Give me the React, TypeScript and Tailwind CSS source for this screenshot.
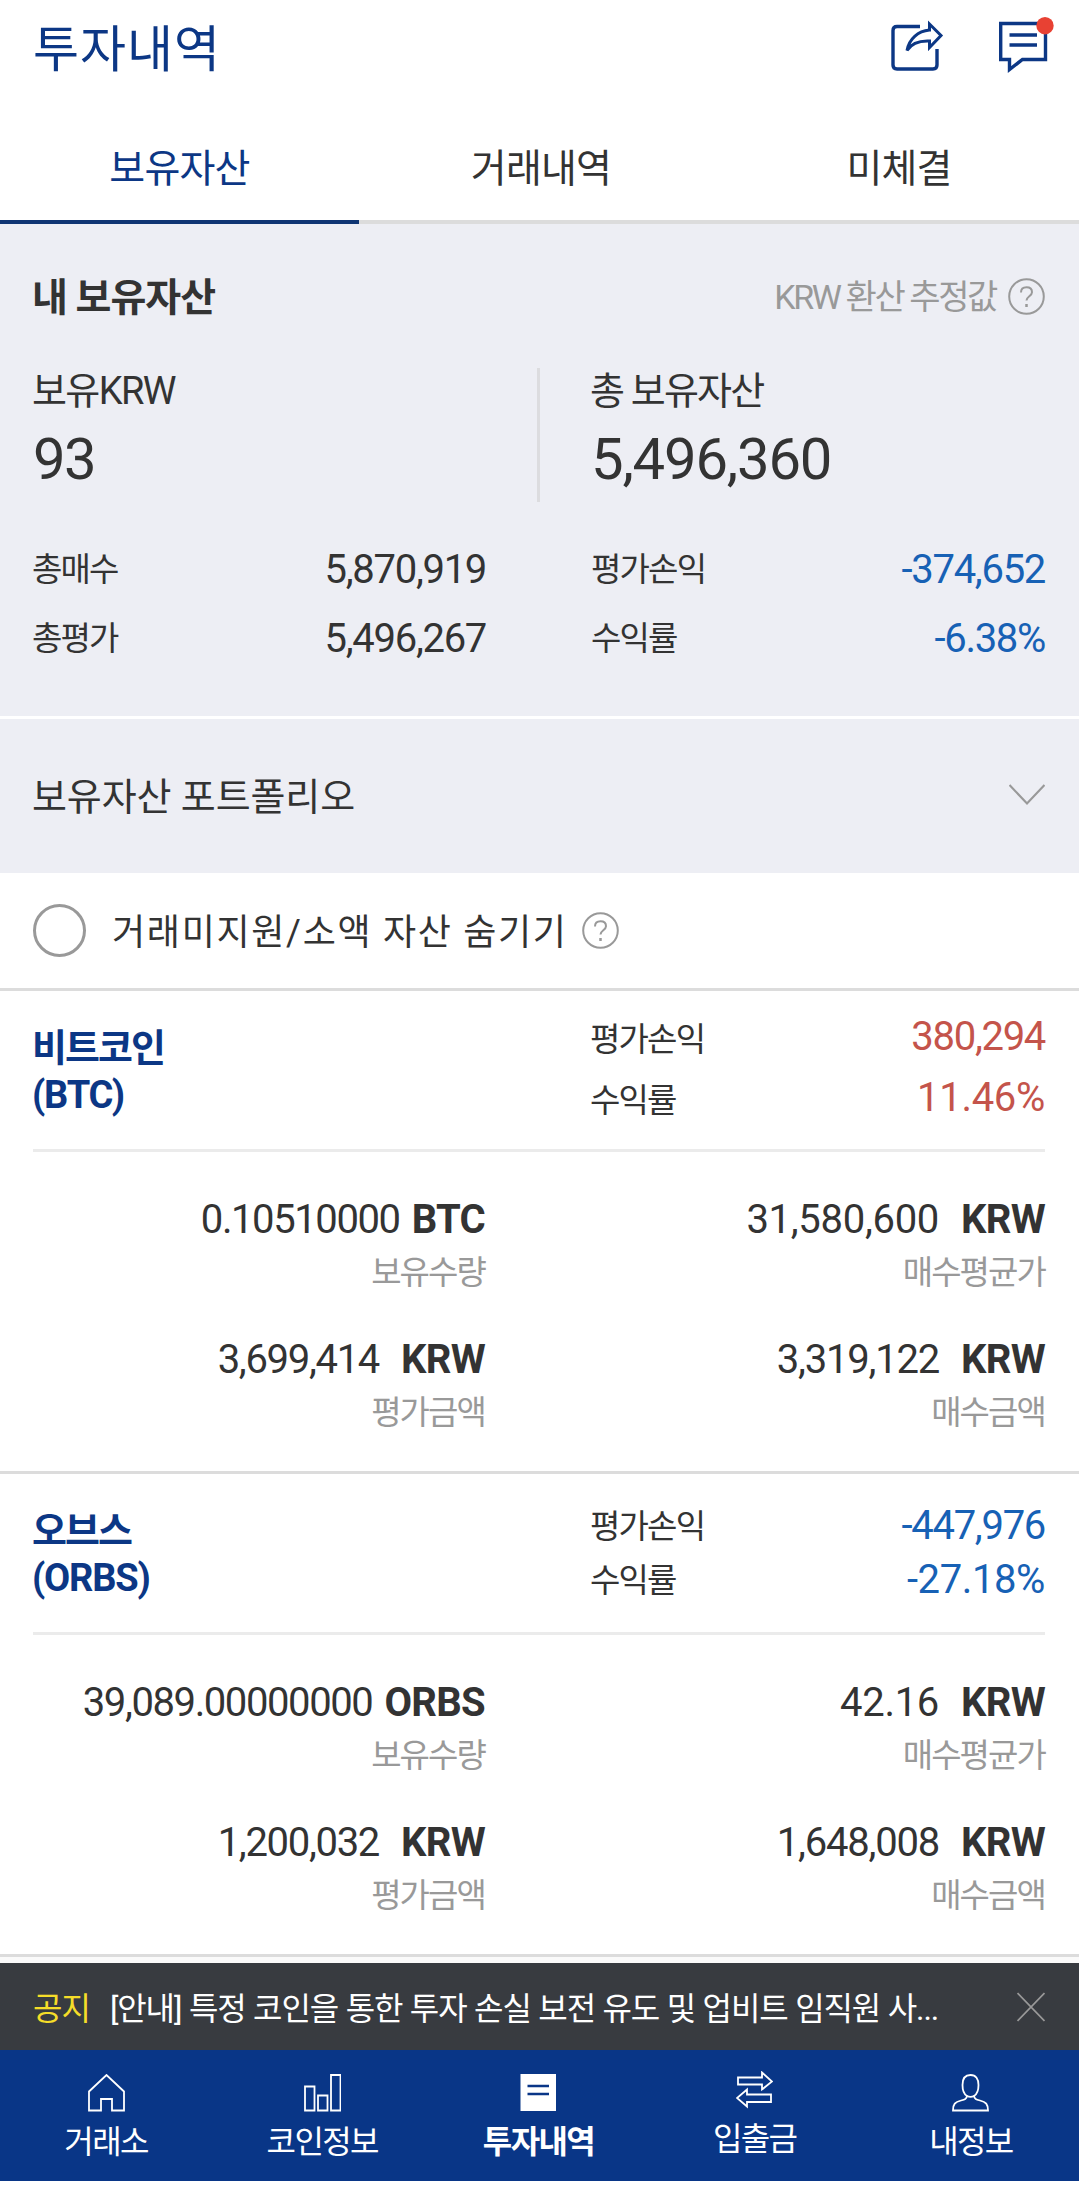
import type { ReactNode } from 'react';

interface Asset {
  name: string;
  symbol: string;
  profit: string;
  profitClass: string;
  rate: string;
  rateClass: string;
  toneClass: string;
  labelsClass: string;
  valuesClass: string;
  cells: { value: string; valueClass: string; unit: string; unitClass: string; label: string }[];
}

const assets: Asset[] = [
  {
    name: '비트코인',
    symbol: 'BTC',
    profit: '380,294',
    profitClass: 'tracking-[-1.3px]',
    rate: '11.46%',
    rateClass: 'tracking-[-0.3px]',
    toneClass: 'text-[#c4544b]',
    labelsClass: 'leading-[61px]',
    valuesClass: 'leading-[61px] pb-[7px]',
    cells: [
      { value: '0.10510000', valueClass: 'tracking-[-1.4px]', unit: 'BTC', unitClass: 'ml-[12px]', label: '보유수량' },
      { value: '31,580,600', valueClass: 'tracking-[-0.3px]', unit: 'KRW', unitClass: 'ml-[22px]', label: '매수평균가' },
      { value: '3,699,414', valueClass: 'tracking-[-1.3px]', unit: 'KRW', unitClass: 'ml-[22px]', label: '평가금액' },
      { value: '3,319,122', valueClass: 'tracking-[-1.2px]', unit: 'KRW', unitClass: 'ml-[22px]', label: '매수금액' },
    ],
  },
  {
    name: '오브스',
    symbol: 'ORBS',
    profit: '-447,976',
    profitClass: 'tracking-[-1.3px]',
    rate: '-27.18%',
    rateClass: 'tracking-[-0.4px]',
    toneClass: 'text-[#1761b5]',
    labelsClass: 'leading-[54px] pt-[1px]',
    valuesClass: 'leading-[54px]',
    cells: [
      { value: '39,089.00000000', valueClass: 'tracking-[-1.4px]', unit: 'ORBS', unitClass: 'ml-[12px]', label: '보유수량' },
      { value: '42.16', valueClass: 'tracking-[-0.3px]', unit: 'KRW', unitClass: 'ml-[22px]', label: '매수평균가' },
      { value: '1,200,032', valueClass: 'tracking-[-1.3px]', unit: 'KRW', unitClass: 'ml-[22px]', label: '평가금액' },
      { value: '1,648,008', valueClass: 'tracking-[-1.2px]', unit: 'KRW', unitClass: 'ml-[22px]', label: '매수금액' },
    ],
  },
];

export default function App() {
  return (
    <div className="w-[1079px] h-[2189px] overflow-hidden bg-white text-[#333] font-['Roboto','Noto_Sans_CJK_KR',sans-serif]">
      {/* Header */}
      <header className="flex h-[100px] items-start justify-between pl-[33px] pr-[24px] text-[#0c3785]">
        <h1 className="text-[50px] leading-[100px] tracking-[1px]">투자내역</h1>
        <div className="flex pt-[17px]">
          <ShareIcon />
          <ChatIcon />
        </div>
      </header>

      {/* Tabs */}
      <nav className="grid h-[124px] grid-cols-[359px_361px_1fr] grid-rows-[124px] text-center text-[39px] leading-[138px] tracking-[-0.8px]">
        <a className="h-[124px] border-b-4 border-[#0f3573] text-[#0c3785]">보유자산</a>
        <a className="h-[124px] border-b-4 border-[#dcdcdc] pl-[3px]">거래내역</a>
        <a className="h-[124px] border-b-4 border-[#dcdcdc] pr-[1px]">미체결</a>
      </nav>

      <Summary />

      <section className="flex h-[157px] items-center justify-between border-t-3 border-white bg-[#edeef4] pl-[32px] pr-[34px]">
        <span className="mt-[2px] text-[38px] tracking-[-0.1px]">보유자산 포트폴리오</span>
        <svg width="36" height="22" viewBox="0 0 36 22" fill="none" stroke="#999" strokeWidth="2.2" className="mb-[2px]">
          <path d="M0.500 1l17.500 18.500L35.500 1" />
        </svg>
      </section>

      <div className="flex h-[115px] items-center pl-[33px]">
        <span className="size-[53px] rounded-full border-3 border-[#999]" />
        <span className="ml-[26px] mt-[5px] text-[36px] tracking-[1.7px]">거래미지원/소액 자산 숨기기</span>
        <HelpIcon className="ml-[14px]" />
      </div>

      {assets.map((asset) => (
        <AssetCard key={asset.symbol} asset={asset} />
      ))}

      <div className="h-[9px] border-t-3 border-[#dcdcdc] bg-[#fafafa]" />

      {/* Notice */}
      <div className="flex h-[87px] items-center bg-[#383b40] pl-[33px] pr-[34px] text-[32px] text-white">
        <span className="mt-[4px] tracking-[-1px] text-[#f5dd29]">공지</span>
        <span className="ml-[20px] mt-[4px] flex-1 tracking-[-1.1px] [word-spacing:0.7px] whitespace-nowrap">
          [안내] 특정 코인을 통한 투자 손실 보전 유도 및 업비트 임직원 사...
        </span>
        <svg width="28" height="30" viewBox="0 0 28 30" fill="none" stroke="#999" strokeWidth="1.8">
          <path d="M0.5 1l27 28M27.5 1l-27 28" />
        </svg>
      </div>

      <BottomNav />
    </div>
  );
}

function Summary() {
  return (
    <section className="h-[492px] bg-[#edeef4] pl-[33px] pr-[34px] pt-[50px]">
      <div className="flex h-[49px] items-center justify-between">
        <h2 className="-ml-[1px] text-[39px] font-bold tracking-[-1px]">내 보유자산</h2>
        <div className="flex items-center pb-[5px] text-[34px] tracking-[-2.4px] text-[#999]">
          <span className="mt-[3px]">KRW 환산 추정값</span>
          <HelpIcon className="ml-[12px]" />
        </div>
      </div>

      <div className="mt-[45px] flex h-[134px]">
        <div className="w-[507px] border-r-3 border-[#dcdcdf]">
          <p className="-ml-[1px] text-[38px] leading-[46px] tracking-[-1.6px]">보유KRW</p>
          <p className="mt-[11px] text-[58px] leading-[68px] tracking-[-1.5px]">93</p>
        </div>
        <div className="pl-[51px]">
          <p className="-ml-[1px] text-[38px] leading-[46px] tracking-[-1.8px]">총 보유자산</p>
          <p className="mt-[11px] text-[58px] leading-[68px] tracking-[-1.2px]">5,496,360</p>
        </div>
      </div>

      <div className="mt-[33px] flex justify-between">
        <dl className="w-[454px] -ml-[1px]">
          <SummaryRow label="총매수" value="5,870,919" />
          <SummaryRow label="총평가" value="5,496,267" />
        </dl>
        <dl className="w-[454px] text-[#1761b5]">
          <SummaryRow label="평가손익" value="-374,652" />
          <SummaryRow label="수익률" value="-6.38%" />
        </dl>
      </div>
    </section>
  );
}

function SummaryRow({ label, value }: { label: string; value: string }) {
  return (
    <div className="flex h-[69px] items-center justify-between">
      <dt className="text-[33px] tracking-[-1.8px] text-[#333]">{label}</dt>
      <dd className="text-[40px] tracking-[-1.3px]">{value}</dd>
    </div>
  );
}

function AssetCard({ asset }: { asset: Asset }) {
  return (
    <section className="h-[483px] border-t-3 border-[#dcdcdc] pl-[33px] pr-[34px]">
      <div className="flex h-[161px] items-center border-b-3 border-[#ebebeb]">
        <h3 className="-ml-[1px] w-[558px] pt-[3px] text-[38px] leading-[47px] font-bold text-[#0c3785]">
          <span className="block tracking-[-2px]">{asset.name}</span>
          <span className="block tracking-[-1.2px]">({asset.symbol})</span>
        </h3>
        <div className={`text-[33px] tracking-[-1.8px] ${asset.labelsClass}`}>
          <p>평가손익</p>
          <p>수익률</p>
        </div>
        <div className={`flex-1 text-right text-[40px] ${asset.valuesClass} ${asset.toneClass}`}>
          <p className={asset.profitClass}>{asset.profit}</p>
          <p className={asset.rateClass}>{asset.rate}</p>
        </div>
      </div>

      <div className="grid grid-cols-[452px_1fr] gap-y-[34px] pt-[38px] text-right">
        {asset.cells.map((cell) => (
          <div key={cell.label}>
            <p className="text-[40px] leading-[60px]">
              <span className={cell.valueClass}>{cell.value}</span>
              <b className={`tracking-[-0.7px] ${cell.unitClass}`}>{cell.unit}</b>
            </p>
            <p className="text-[33px] leading-[46px] tracking-[-1.9px] text-[#999]">{cell.label}</p>
          </div>
        ))}
      </div>
    </section>
  );
}

function BottomNav() {
  return (
    <nav className="-ml-[2px] grid h-[131px] w-[1081px] grid-cols-5 bg-[#093687] text-white">
      <NavItem label="거래소" className="pt-[24px]">
        <path d="M1 36.5V17.5L18.5 1 36 17.5V36.5H24V25H13V36.5Z" />
      </NavItem>
      <NavItem label="코인정보" className="pt-[24px]">
        <path d="M1 12.5h9.5v24H1zM14 21.5h9.5v15H14zM27 1h9.5v35.5H27z" />
      </NavItem>
      <NavItem label="투자내역" className="pt-[24px] font-bold">
        <path d="M0.5 0h35.5v37H0.5z" fill="#fff" stroke="none" />
        <path d="M7.5 12h21.5M7.5 20h21.5" stroke="#093687" strokeWidth="2.4" />
      </NavItem>
      <NavItem label="입출금" className="pt-[21px]">
        <path d="M2 6.5H26V1.5L36 10.5 26 18.5V13.5H2ZM35 23.5H11V18.5L1 27 11 35.5V31H35Z" />
      </NavItem>
      <NavItem label="내정보" className="pt-[24px]">
        <path d="M18.5 1C13 1 10.5 5 10.5 11C10.5 16.5 12.5 20.5 15 22C14.5 25 13 25.5 9 26.5C3 28 1 30 1 36.5H36C36 30 34 28 28 26.5C24 25.5 22.5 25 22 22C24.5 20.5 26.5 16.5 26.5 11C26.5 5 24 1 18.5 1Z" />
        <path d="M15 22C17 23 20 23 22 22" />
      </NavItem>
    </nav>
  );
}

function NavItem({ label, className, children }: { label: string; className: string; children: ReactNode }) {
  return (
    <a className={`flex flex-col items-center ${className}`}>
      <svg width="37" height="38" viewBox="0 0 37 38" fill="none" stroke="#fff" strokeWidth="1.8">
        {children}
      </svg>
      <span className="mt-[8px] text-[32px] leading-[44px] tracking-[-1.6px]">{label}</span>
    </a>
  );
}

function HelpIcon({ className }: { className: string }) {
  return (
    <svg width="37" height="37" viewBox="0 0 37 37" fill="none" stroke="#999" strokeWidth="2" className={className}>
      <circle cx="18.5" cy="18.5" r="17.3" />
      <path d="M13 14.5C13 11.2 15.2 9.3 18.5 9.3C21.8 9.3 24 11.2 24 14.2C24 18 18.5 18.5 18.5 22.5" />
      <path d="M18.5 26v3" strokeWidth="2.5" />
    </svg>
  );
}

function ShareIcon() {
  return (
    <svg width="56" height="56" viewBox="0 -3 56 56" fill="none" stroke="currentColor" strokeWidth="3.4" className="mr-[52px]">
      <path d="M29 6.5H6Q2 6.5 2 10.5V45Q2 49 6 49H42Q46 49 46 45V29" />
      <path d="M38.5 10V4L50 15.5L38.5 27.5V21C28 20.5 20 24 16 30.5C18 19 27 11 38.5 10Z" strokeWidth="3" />
    </svg>
  );
}

function ChatIcon() {
  return (
    <svg width="56" height="56" viewBox="0 0 56 56" fill="none" stroke="currentColor" strokeWidth="3.4">
      <path d="M1.7 6.5H46.5V42.5H23.5L10.5 52.5V42.5H1.7Z" />
      <path d="M10.5 18H38M10.5 28H38" />
      <circle cx="46" cy="8.7" r="8.7" fill="#e84133" stroke="none" />
    </svg>
  );
}
